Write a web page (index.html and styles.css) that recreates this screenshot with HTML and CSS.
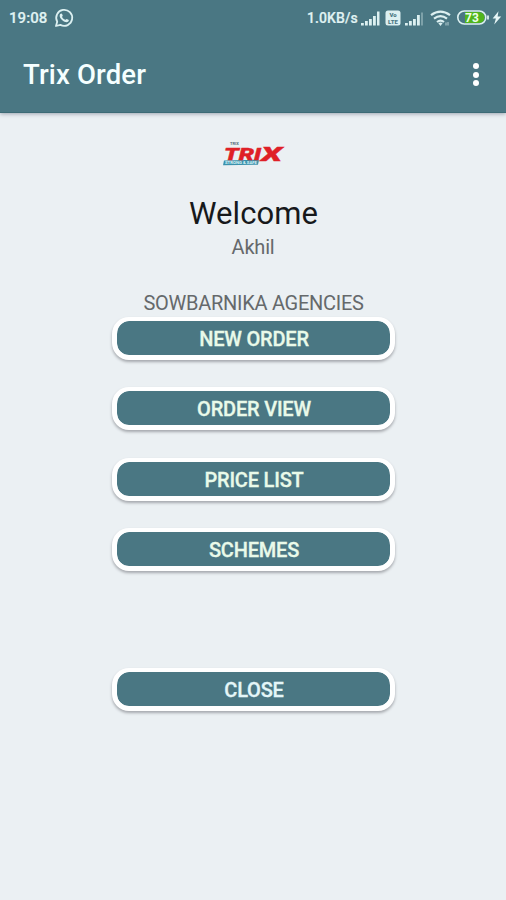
FILE: index.html
```html
<!DOCTYPE html>
<html lang="en">
<head>
<meta charset="utf-8">
<title>Trix Order</title>
<link rel="stylesheet" href="styles.css">
</head>
<body>
<header class="top">
  <div class="status">
    <span class="time">19:08</span>
    <svg class="whatsapp" width="20" height="20" viewBox="0 0 20 20">
      <path d="M2 18l1.2-4.3A8 8 0 1 1 6.400 16.900z" fill="none" stroke="#dcf0f1" stroke-width="1.8" stroke-linejoin="round"/>
      <path d="M6.200 6.100c.8-1 1.500-.9 1.900 0l.6 1.400c.2.600-.8 1.100-.6 1.500.7 1.400 1.700 2.300 3.100 2.800.5.100 1-.9 1.500-.8l1.700.8c.7.300.4 1.500-.4 2-1.500 1-3.600.2-5.400-1.200C6.500 11 4.800 8.300 6.200 6.100z" fill="#dcf0f1"/>
    </svg>
    <span class="speed">1.0KB/s</span>
    <svg class="indicators" width="146" height="24" viewBox="0 0 146 24">
      <g fill="#dcf0f1">
        <path d="M1 17h2.800v2.500H1zM5 15h2.800v4.500H5zM9 13h2.800v6.500H9zM13 10h2.800v9.500H13zM17 5.500h2.500v14H17z"/>
        <rect x="25.500" y="4.500" width="15" height="15" rx="2.500"/>
        <path d="M45 17h2.800v2.500H45zM49 15h2.800v4.500H49zM53 13h2.800v6.500H53zM57 9h2.800v10.500H57z"/>
        <path d="M61 6.500h2v13h-2z" opacity=".35"/>
      </g>
      <text class="volte" x="33" y="11">Vo</text>
      <text class="volte" x="33" y="18">LTE</text>
      <g fill="none" stroke="#dcf0f1" stroke-width="2.200">
        <path d="M71 9.200q9.500-7 19 0M74 12.700q6.500-5 13 0M77 16q3.500-2.700 7 0"/>
      </g>
      <path d="M78.300 17.100q2.200-1.400 4.400 0l-2.200 2.900z" fill="#dcf0f1"/>
      <path d="M86 16.500v3M88 16v3.500" stroke="#b6d0d3"/>
      <path d="M105 6h14a5.500 5.500 0 0 1 0 11h-14z" fill="#50b51c"/>
      <rect x="97.800" y="5" width="28" height="13" rx="6.500" fill="none" stroke="#dcf0f1" stroke-width="1.600"/>
      <path d="M128 9.500v4" stroke="#dcf0f1" stroke-width="1.800"/>
      <text class="battery" x="112" y="16">73</text>
      <path d="M138.500 5.300l-5.900 7.200h3.300l-1.700 6.100 7-8.100h-3.600z" fill="#e6f6f6"/>
    </svg>
  </div>
  <div class="bar">
    <h1>Trix Order</h1>
    <div class="menu"><i></i><i></i><i></i></div>
  </div>
</header>
<main>
  <svg class="logo" width="66" height="32" viewBox="0 0 66 32">
    <text x="10" y="6.500" class="maker">TRIX</text>
    <path d="M4 22.500l35-.8-1 5-35 .5z" fill="#3b91ab"/>
    <text x="5" y="26.300" class="tagline" textLength="32" lengthAdjust="spacingAndGlyphs">STRONG &amp; SAFE</text>
    <text class="brand" x="4" y="21.500" textLength="37" lengthAdjust="spacingAndGlyphs">TRI</text>
    <text class="brand brand-x" x="41" y="22.500" textLength="21" lengthAdjust="spacingAndGlyphs">X</text>
  </svg>
  <h2>Welcome</h2>
  <p class="user">Akhil</p>
  <p class="agency">SOWBARNIKA AGENCIES</p>
  <div class="buttons">
    <button>NEW ORDER</button>
    <button>ORDER VIEW</button>
    <button>PRICE LIST</button>
    <button>SCHEMES</button>
    <button class="close">CLOSE</button>
  </div>
</main>
</body>
</html>
```
FILE: styles.css
```css
* { box-sizing: border-box; }
body {
  margin: 0;
  height: 900px;
  background: #ebf0f3;
  font-family: Roboto, sans-serif;
  overflow: hidden;
}
.top {
  height: 113px;
  background: #4a7783;
  border-bottom: 1px solid #3d6b76;
  box-shadow: 0 1px 4px #9da5b0;
}
.status {
  display: flex;
  align-items: center;
  height: 36px;
  padding-left: 9px;
  color: #e0f3f3;
  font-weight: 500;
}
.time { width: 45px; font-size: 15px; letter-spacing: .05px; -webkit-text-stroke: .2px; }
.whatsapp { flex: none; }
.speed { width: 53px; margin-left: 233px; font-size: 14px; letter-spacing: .1px; white-space: nowrap; -webkit-text-stroke: .2px; }
.indicators { flex: none; }
.volte { font-size: 6px; font-weight: 900; text-anchor: middle; fill: #4a7783; }
.battery { font-size: 12px; font-weight: 700; text-anchor: middle; fill: #edffe9; }
.bar {
  display: flex;
  align-items: center;
  justify-content: space-between;
  height: 76px;
  padding: 1px 27px 0 23px;
}
h1 { margin: 0; color: #f5ffff; font-size: 27.500px; line-height: 32px; font-weight: 500; letter-spacing: .15px; }
.menu { display: flex; flex-direction: column; gap: 2.400px; }
.menu i { width: 6px; height: 6px; border-radius: 50%; background: #fff; }
main { display: flex; flex-direction: column; align-items: center; padding-top: 25px; }
.logo { display: block; }
.maker { font-size: 4px; font-weight: 700; fill: #566b78; }
.brand { font-size: 17px; font-weight: 900; font-style: italic; fill: #df2027; stroke: #df2027; stroke-width: .4px; }
.brand-x { font-size: 20px; }
.tagline { font-size: 4px; font-weight: 700; fill: #d9f3f8; }
h2 { margin: 25px 0 0; padding-left: 1px; color: #17191b; font-size: 31px; line-height: 38px; font-weight: 400; letter-spacing: .1px; }
p { margin: 0; color: #65696b; font-size: 20px; line-height: 24px; }
.user { margin-top: 2px; letter-spacing: -.2px; }
.agency { margin-top: 32px; padding-left: 1px; letter-spacing: -.27px; }
.buttons { display: flex; flex-direction: column; gap: 27.300px; margin-top: 2px; }
button {
  width: 283px;
  height: 43px;
  padding: 2px 0 0 2px;
  border: 5px solid #fff;
  border-top-width: 4px;
  border-radius: 17px;
  background: #4a7783;
  background-clip: padding-box;
  box-shadow: 0 2px 3px #a5a8ad;
  color: #e9fae9;
  font: 500 20px/32px Roboto, sans-serif;
  letter-spacing: -.2px;
  -webkit-text-stroke: .3px;
}
.close { margin-top: 70.300px; color: #e4f6f8; }
```
